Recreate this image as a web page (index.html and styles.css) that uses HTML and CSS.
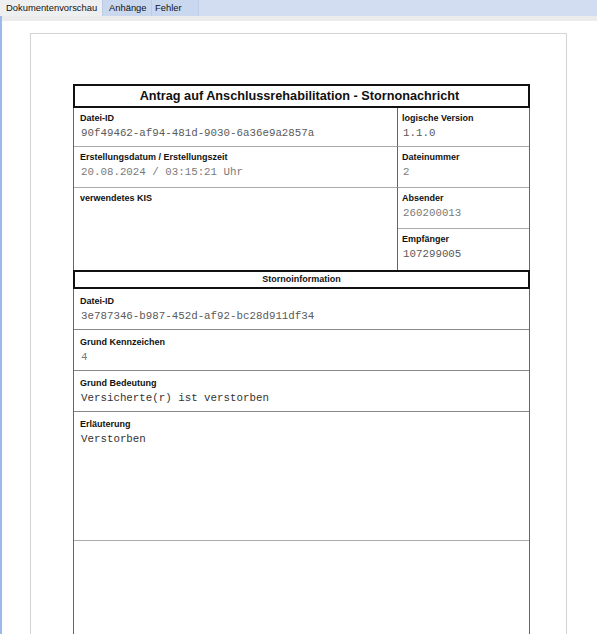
FILE: index.html
```html
<!DOCTYPE html>
<html>
<head>
    <meta charset="utf-8">
    <title>Dokumentenvorschau</title>
    <link rel="stylesheet" href="styles.css">
</head>
<body>
    <!-- tab strip -->
    <div class="tabs">
        <span class="tab active">Dokumentenvorschau</span>
        <span class="tab attach">Anhänge</span>
        <span class="tab errors">Fehler</span>
    </div>
    <div class="strip"></div>
    <div class="pane">
        <div class="sheet">
            <div class="form">
                <div class="title">Antrag auf Anschlussrehabilitation - Stornonachricht</div>
                <!-- header block -->
                <div class="head">
                    <div class="cell left">
                        <div class="label">Datei-ID</div>
                        <div class="value">90f49462-af94-481d-9030-6a36e9a2857a</div>
                    </div>
                    <div class="cell">
                        <div class="label">logische Version</div>
                        <div class="value">1.1.0</div>
                    </div>
                    <div class="cell left">
                        <div class="label">Erstellungsdatum / Erstellungszeit</div>
                        <div class="value light">20.08.2024 / 03:15:21 Uhr</div>
                    </div>
                    <div class="cell">
                        <div class="label">Dateinummer</div>
                        <div class="value light">2</div>
                    </div>
                    <div class="cell left kis last">
                        <div class="label">verwendetes KIS</div>
                    </div>
                    <div class="cell">
                        <div class="label">Absender</div>
                        <div class="value light">260200013</div>
                    </div>
                    <div class="cell last">
                        <div class="label">Empfänger</div>
                        <div class="value">107299005</div>
                    </div>
                </div>
                <div class="section">Stornoinformation</div>
                <!-- storno block -->
                <div class="body">
                    <div class="row">
                        <div class="label">Datei-ID</div>
                        <div class="value">3e787346-b987-452d-af92-bc28d911df34</div>
                    </div>
                    <div class="row">
                        <div class="label">Grund Kennzeichen</div>
                        <div class="value light">4</div>
                    </div>
                    <div class="row">
                        <div class="label">Grund Bedeutung</div>
                        <div class="value dark">Versicherte(r) ist verstorben</div>
                    </div>
                    <div class="row tall">
                        <div class="label">Erläuterung</div>
                        <div class="value dark">Verstorben</div>
                    </div>
                    <div class="row tall"></div>
                </div>
            </div>
        </div>
    </div>
</body>
</html>
```

FILE: styles.css
```css
html, body {
    margin: 0;
    height: 100%;
    overflow: hidden;
}
body {
    background-color: #fff;
    font-family: "Liberation Sans", Arial, sans-serif;
}
.tabs {
    display: flex;
    height: 16px;
    background-color: #d2ddf1;
}
.tab {
    box-sizing: border-box;
    font-family: "Liberation Sans", Arial, sans-serif;
    font-size: 9.4px;
    line-height: 16px;
    color: #111;
    border-right: 1px solid #bccbe6;
    background-color: #cad8ef;
    white-space: nowrap;
    overflow: hidden;
}
.tab.active {
    width: 103px;
    padding-left: 6px;
    background-color: #eeeff1;
}
.tab.attach {
    width: 49px;
    padding-left: 6px;
}
.tab.errors {
    width: 47px;
    padding-left: 3px;
}
.strip {
    height: 5px;
    background-color: #ebebeb;
    border-left: 2px solid #9db9ea;
}
.pane {
    height: 100%;
    border-left: 2px solid #9db9ea;
    padding: 12px 0 0 28px;
}
.sheet {
    width: 457px;
    height: 100%;
    border: 1px solid #d4d4d4;
    padding: 50px 36px 0 42px;
}
.form {
    width: 457px;
}
.title {
    box-sizing: border-box;
    height: 24px;
    border: 2px solid #111;
    padding-right: 4px;
    text-align: center;
    font-weight: bold;
    font-size: 12.7px;
    line-height: 20px;
    color: #111;
}
.head {
    display: grid;
    grid-template-columns: 324px 1fr;
    grid-template-rows: 39px 41px 41px 41px;
    border-left: 1px solid #666;
    border-right: 1px solid #666;
}
.cell {
    box-sizing: border-box;
    border-bottom: 1px solid #aaa;
    padding: 4px 5px 0 4px;
}
.cell.left {
    border-right: 1px solid #666;
    padding-left: 6px;
}
.cell.kis {
    grid-row: 3 / 5;
}
.cell.last {
    border-bottom: none;
}
.label {
    font-size: 9px;
    font-weight: bold;
    line-height: 12px;
    color: #111;
}
.value {
    font-family: "Liberation Mono", "Courier New", monospace;
    font-size: 10.8px;
    line-height: 18px;
    color: #5a5a5a;
    padding-left: 1px;
}
.value.light {
    color: #7a7a7a;
}
.value.dark {
    color: #333;
}
.section {
    box-sizing: border-box;
    height: 19px;
    border: 2px solid #111;
    text-align: center;
    font-size: 9px;
    font-weight: bold;
    line-height: 15px;
    color: #111;
}
.body {
    border-left: 1px solid #666;
    border-right: 1px solid #666;
}
.row {
    box-sizing: border-box;
    height: 41px;
    border-bottom: 1px solid #888;
    padding: 6px 6px 0 6px;
}
.row.tall {
    height: 129px;
    border-bottom-color: #aaa;
}
```
